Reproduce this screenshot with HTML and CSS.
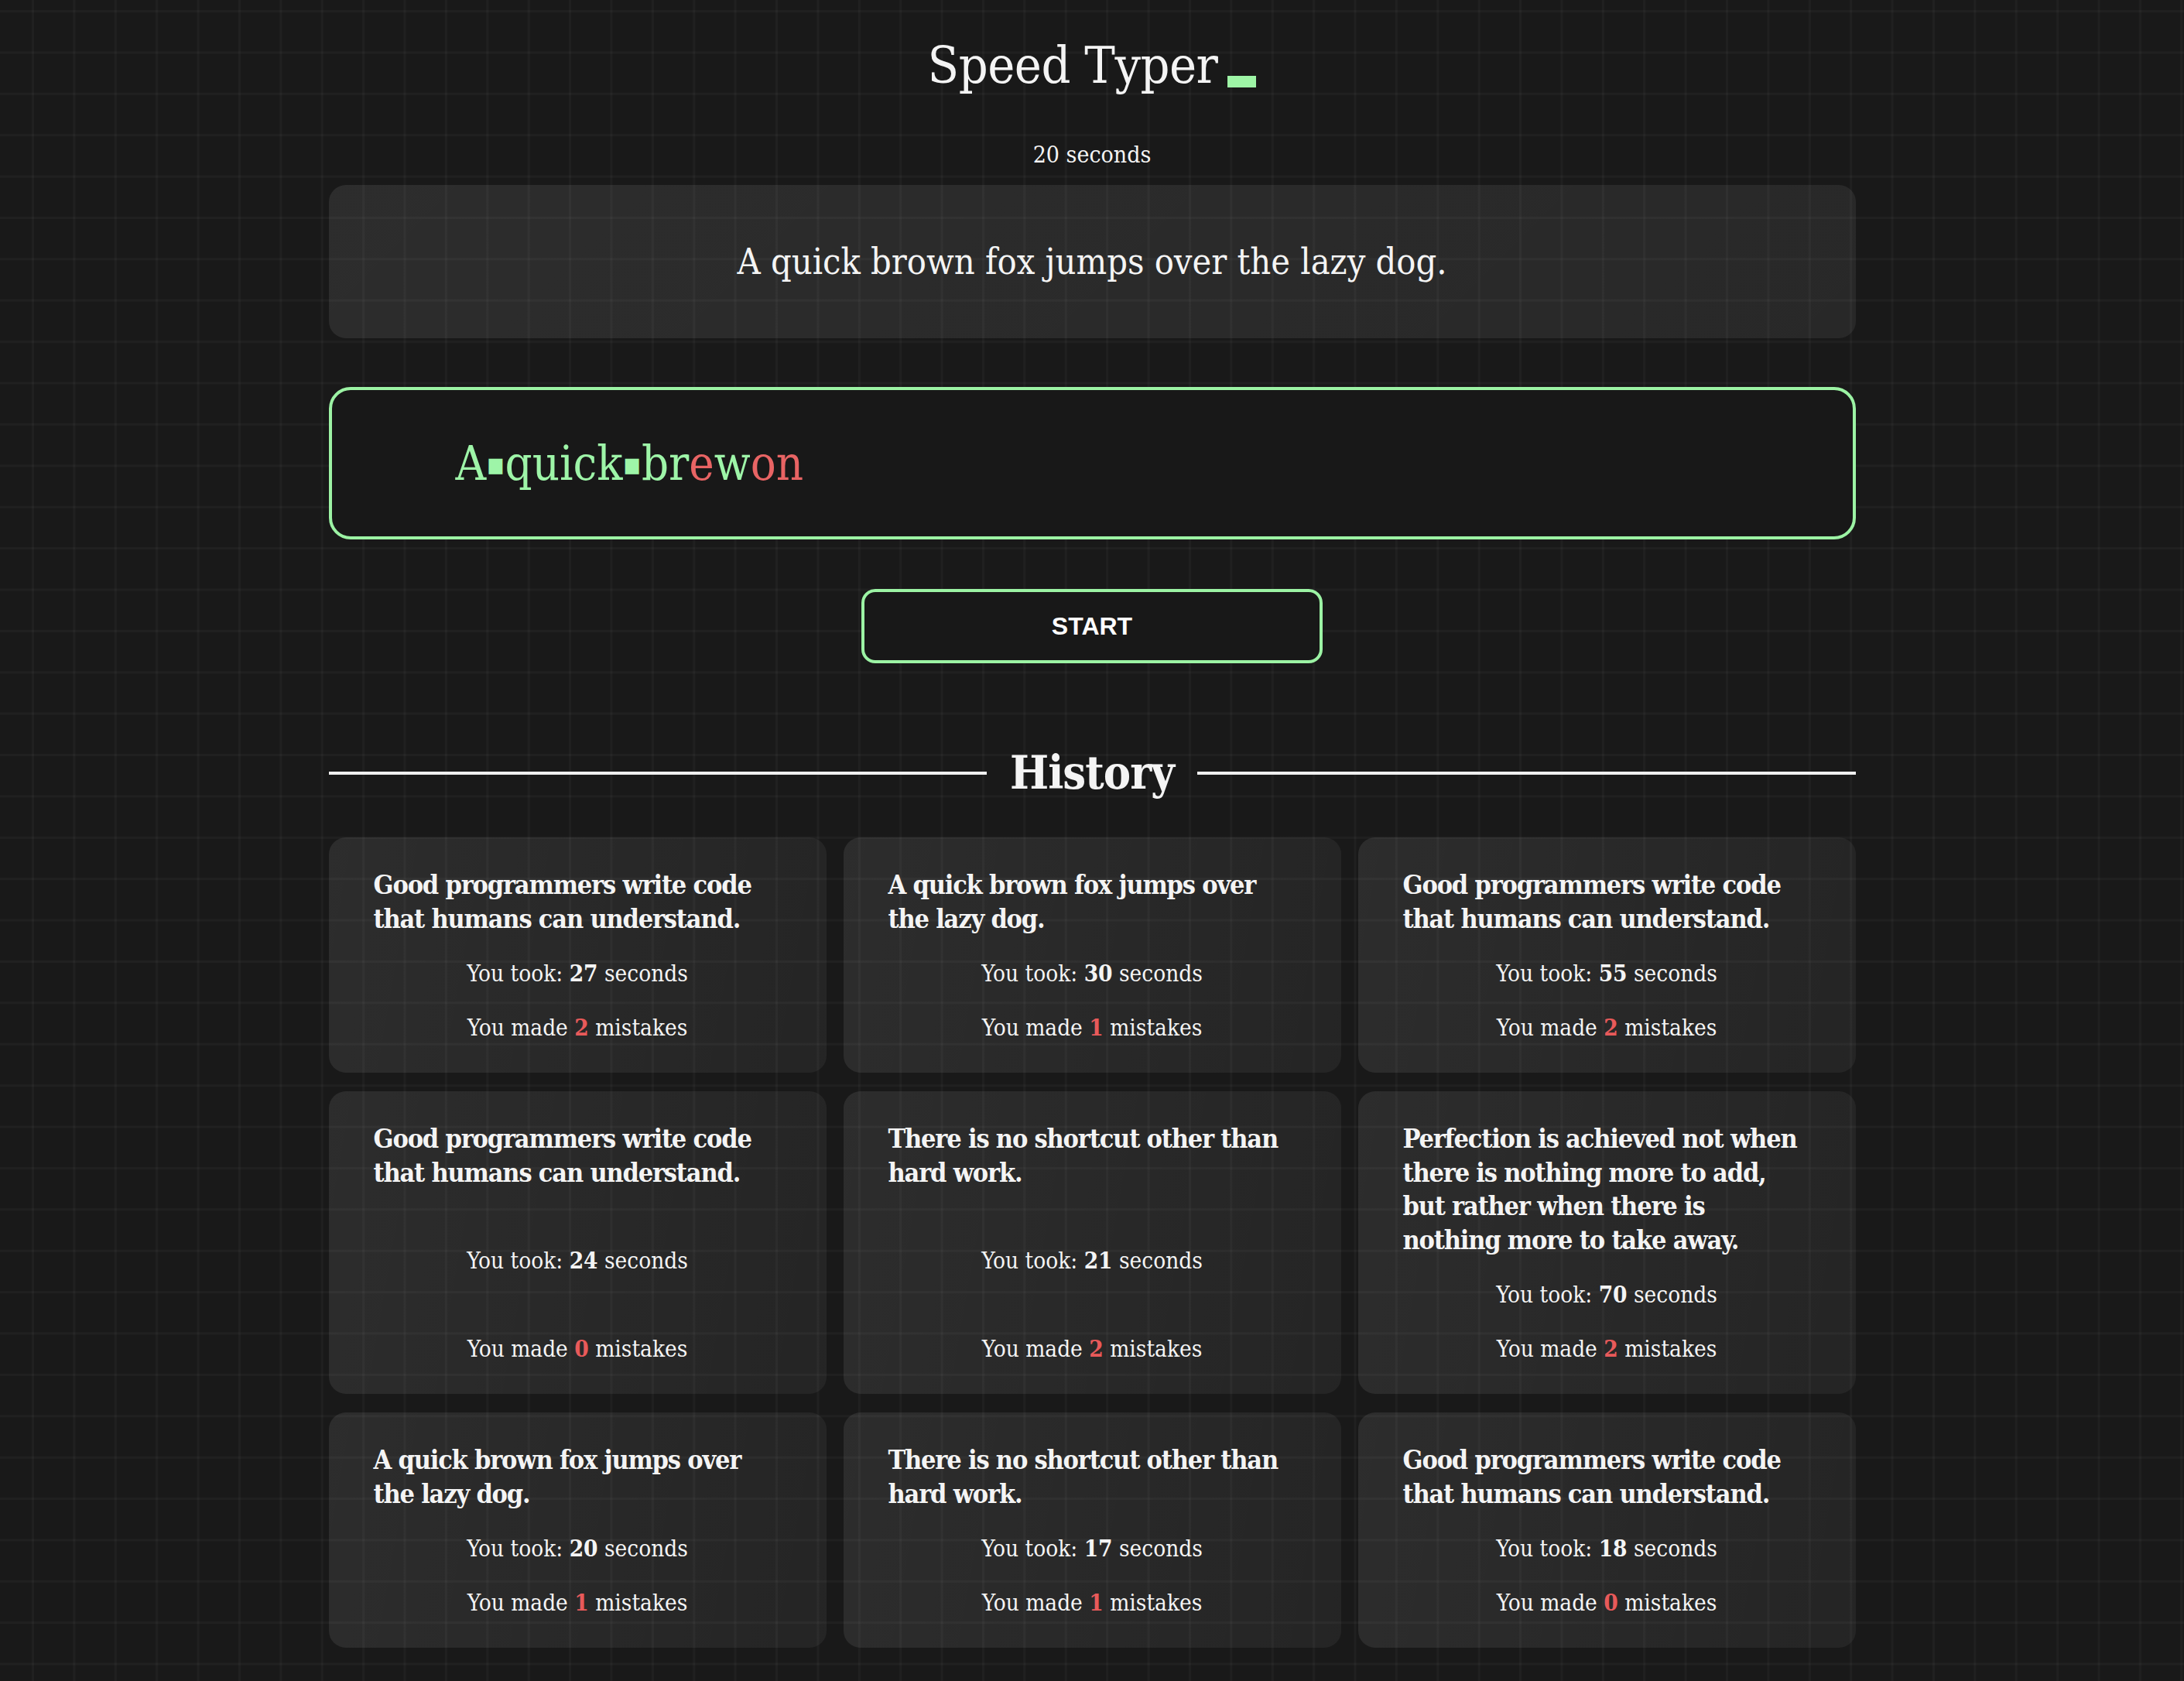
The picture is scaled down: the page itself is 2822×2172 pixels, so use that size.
FILE: index.html
```html
<!DOCTYPE html>
<html lang="en">
<head>
<meta charset="utf-8">
<title>Speed Typer</title>
<link rel="stylesheet" href="styles.css">
</head>
<body>
<main class="app">
  <h1 class="title">Speed Typer<span class="cursor"></span></h1>
  <p class="timer">20 seconds</p>

  <div class="sentence">A quick brown fox jumps over the lazy dog.</div>

  <div class="typing">
    <span class="ok">A</span><span class="ok sp">▪</span><span class="ok">quick</span><span class="ok sp">▪</span><span class="ok">br</span><span class="bad">e</span><span class="ok">w</span><span class="bad">on</span>
  </div>

  <div class="actions"><button class="start">START</button></div>

  <div class="history-head"><span class="rule"></span><h2>History</h2><span class="rule"></span></div>

  <section class="cards">
    <article class="card"><h3>Good programmers write code that humans can understand.</h3><p>You took: <b>27</b> seconds</p><p>You made <b class="err">2</b> mistakes</p></article>
    <article class="card"><h3>A quick brown fox jumps over the lazy dog.</h3><p>You took: <b>30</b> seconds</p><p>You made <b class="err">1</b> mistakes</p></article>
    <article class="card"><h3>Good programmers write code that humans can understand.</h3><p>You took: <b>55</b> seconds</p><p>You made <b class="err">2</b> mistakes</p></article>
    <article class="card"><h3>Good programmers write code that humans can understand.</h3><p>You took: <b>24</b> seconds</p><p>You made <b class="err">0</b> mistakes</p></article>
    <article class="card"><h3>There is no shortcut other than hard work.</h3><p>You took: <b>21</b> seconds</p><p>You made <b class="err">2</b> mistakes</p></article>
    <article class="card"><h3>Perfection is achieved not when there is nothing more to add, but rather when there is nothing more to take away.</h3><p>You took: <b>70</b> seconds</p><p>You made <b class="err">2</b> mistakes</p></article>
    <article class="card"><h3>A quick brown fox jumps over the lazy dog.</h3><p>You took: <b>20</b> seconds</p><p>You made <b class="err">1</b> mistakes</p></article>
    <article class="card"><h3>There is no shortcut other than hard work.</h3><p>You took: <b>17</b> seconds</p><p>You made <b class="err">1</b> mistakes</p></article>
    <article class="card"><h3>Good programmers write code that humans can understand.</h3><p>You took: <b>18</b> seconds</p><p>You made <b class="err">0</b> mistakes</p></article>
  </section>
</main>
</body>
</html>
```

FILE: styles.css
```css
html, body {
  margin: 0;
  padding: 0;
}
body {
  background-color: #191919;
  background-image:
    linear-gradient(90deg, rgba(255,255,255,0.03) 3px, transparent 3px),
    linear-gradient(180deg, rgba(255,255,255,0.03) 3px, transparent 3px);
  background-size: 53.4px 53.4px;
  background-position: 41px 13px;
  color: #f4f4f4;
  font-family: "DejaVu Serif", "Liberation Serif", serif;
  font-stretch: condensed;
  min-height: 2172px;
}
.app {
  width: 1973px;
  margin: 0 auto;
  padding-bottom: 50px;
}
.title {
  margin: 49px 0 0;
  font-size: 66px;
  line-height: 72px;
  font-weight: 400;
  text-align: center;
  letter-spacing: -0.5px;
}
.cursor {
  display: inline-block;
  width: 37px;
  height: 15px;
  margin-left: 13px;
  background: #9ef5a6;
  vertical-align: -6px;
}
.timer {
  margin: 59px 0 0;
  font-size: 30px;
  line-height: 40px;
  text-align: center;
}
.sentence {
  margin-top: 19px;
  height: 198px;
  border-radius: 22px;
  background: linear-gradient(135deg, rgba(255,255,255,0.085), rgba(255,255,255,0.065));
  display: flex;
  align-items: center;
  justify-content: center;
  font-size: 46.5px;
}
.typing {
  margin-top: 63px;
  height: 197px;
  box-sizing: border-box;
  border: 4px solid #9cf3a4;
  border-radius: 28px;
  background: #181818;
  display: flex;
  align-items: center;
  padding-left: 160px;
  font-size: 61px;
  white-space: pre;
}
.ok { color: #9ef5a8; }
.bad { color: #e86464; }
.sp {
  font-family: "DejaVu Sans", sans-serif;
  font-size: 40px;
}
.actions {
  margin-top: 64px;
  display: flex;
  justify-content: center;
}
.start {
  width: 596px;
  height: 96px;
  box-sizing: border-box;
  border: 4px solid #9cf3a4;
  border-radius: 18px;
  background: #181818;
  color: #ffffff;
  font-family: "Liberation Sans", Arial, sans-serif;
  font-weight: 700;
  font-size: 32px;
}
.history-head {
  margin-top: 107px;
  display: flex;
  align-items: center;
  gap: 30px;
}
.rule {
  flex: 1;
  height: 4px;
  background: #f0f0f0;
}
.history-head h2 {
  margin: 0;
  font-size: 59px;
  line-height: 70px;
  font-weight: 700;
  letter-spacing: -1px;
}
.cards {
  margin-top: 48px;
  display: grid;
  grid-template-columns: repeat(3, 1fr);
  column-gap: 22px;
  row-gap: 24px;
}
.card {
  border-radius: 22px;
  background: linear-gradient(100deg, rgba(255,255,255,0.085), rgba(255,255,255,0.05));
  padding: 40px 68px 36px 58px;
  display: flex;
  flex-direction: column;
  justify-content: space-between;
  gap: 26.5px;
}
.card h3 {
  margin: 0;
  font-size: 34px;
  line-height: 43.5px;
  font-weight: 700;
  letter-spacing: -1.2px;
}
.card p {
  margin: 0;
  font-size: 29.5px;
  line-height: 43px;
  text-align: center;
  margin-right: -10px;
}
.card b { font-weight: 700; }
.err { color: #e85a5a; }
```
